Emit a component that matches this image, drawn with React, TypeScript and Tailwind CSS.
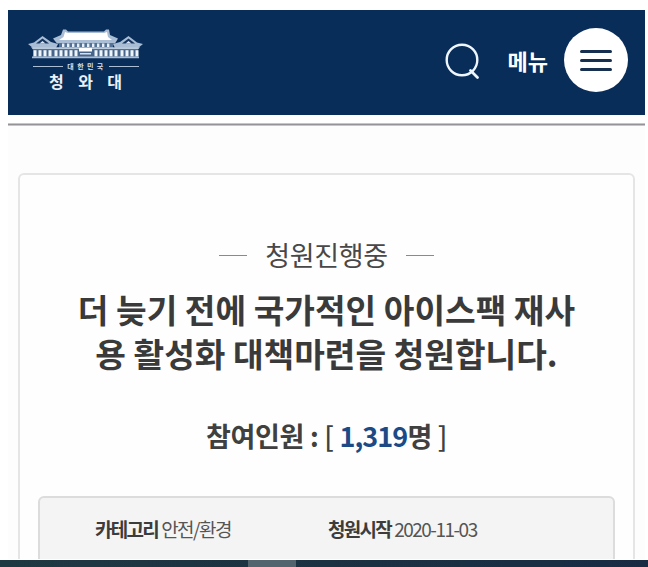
const LEFT_PILLARS = [5, 10, 15, 20, 26, 31, 36, 41, 46];
const RIGHT_PILLARS = [66, 71, 76, 81, 86, 92, 97, 102, 107];
const UPPER_PILLARS = [34, 39, 44, 49, 54, 59, 64, 69, 74, 79];

function BlueHouse() {
  return (
    <svg width="115" height="32" viewBox="0 0 115 32" className="block">
      {/* Side wings */}
      <path d="M0 15 L6 13.5 L14.5 7 L23 13 L30 15 L28 19 H5 Z" fill="#a9bdd4" />
      <path d="M115 15 L109 13.5 L100.5 7 L92 13 L85 15 L87 19 H110 Z" fill="#a9bdd4" />
      <path d="M8 14.5 L14.5 9.5 L21 14.5 Z" fill="#16365f" />
      <path d="M107 14.5 L100.5 9.5 L94 14.5 Z" fill="#16365f" />
      <path d="M11.5 14.5 L14.5 12 L17.5 14.5 Z" fill="#dbe6f2" />
      <path d="M103.5 14.5 L100.5 12 L97.5 14.5 Z" fill="#dbe6f2" />
      {/* Main roof */}
      <path
        d="M35 0.5 H38 L40 2.5 H76 L78 0.5 H81 L82 6 L90 9.5 L87 14.5 H29 L25 9.5 L33 6 Z"
        fill="#a9bdd4"
      />
      <path d="M37 3 L40 4 H76 L79 3 L80 8 L84 11 H31 L35.5 8 Z" fill="#fff" />
      {/* Upper floor and eaves */}
      <path d="M31 14 H85 V19 H31 Z" fill="#537296" />
      {UPPER_PILLARS.map((x) => (
        <rect key={x} x={x} y="14.5" width="2.4" height="3.5" fill="#e6eef7" />
      ))}
      <path d="M3 18.3 H112 L110 20.5 H5 Z" fill="#b9cadd" />
      {/* Ground floor */}
      <path d="M5 20.5 H110 V28 H5 Z" fill="#47658b" />
      {[...LEFT_PILLARS, ...RIGHT_PILLARS].map((x) => (
        <rect key={x} x={x + 0.5} y="21.2" width="3" height="6.2" fill="#eef4fa" />
      ))}
      <path d="M51 19 H64 V22.5 H51 Z" fill="#fff" />
      <path d="M52 24 H63 V25.5 H52 Z" fill="#d6e1ed" />
      <path d="M4 27.5 H111 V29.3 H4 Z" fill="#a9bdd4" />
    </svg>
  );
}

function Header() {
  return (
    <header className="flex h-[105px] shrink-0 items-start justify-between bg-[#092d59] pr-[17px] pl-5 text-white">
      <div className="flex w-[115px] flex-col items-center pt-[19px]">
        <BlueHouse />
        <div className="flex h-[10px] w-[106px] items-center justify-between">
          <span className="h-px w-[30px] bg-[#aabdd3]" />
          <span className="-mr-[3px] text-[7px] leading-[10px] font-bold tracking-[3.4px] text-[#d5e0ec]">대한민국</span>
          <span className="h-px w-[30px] bg-[#aabdd3]" />
        </div>
        <div className="flex w-[73px] justify-between text-[16px] leading-5 font-bold text-[#eaf1f8]">
          <span>청</span>
          <span>와</span>
          <span>대</span>
        </div>
      </div>
      <div className="flex h-[100px] items-center">
        <svg width="36" height="38" viewBox="0 0 36 38" fill="none" stroke="#eef6ff" className="mt-[2px]">
          <circle cx="17" cy="18" r="15.3" strokeWidth="2.4" />
          <path d="M25.5 28.5 L32.5 35.5" strokeWidth="2.8" strokeLinecap="round" />
        </svg>
        <span className="ml-[27px] text-[22px] leading-8 font-bold">메뉴</span>
        <button className="ml-4 flex h-16 w-16 flex-col items-center justify-center gap-[6px] rounded-full bg-white">
          <span className="h-[3px] w-8 rounded-full bg-[#17304f]" />
          <span className="h-[3px] w-8 rounded-full bg-[#17304f]" />
          <span className="h-[3px] w-8 rounded-full bg-[#17304f]" />
        </button>
      </div>
    </header>
  );
}

function Info({ label, value }: { label: string; value: string }) {
  return (
    <div className="flex gap-[3px] text-[19px] leading-7 whitespace-nowrap">
      <span className="font-bold tracking-[-1.7px] text-[#3c3c3c]">{label}</span>
      <span className="tracking-[-1.5px] text-[#555]">{value}</span>
    </div>
  );
}

export default function App() {
  return (
    <div className="flex h-[567px] w-[648px] flex-col overflow-hidden bg-white font-['Noto_Sans_CJK_KR',sans-serif]">
      <div className="flex h-[559px] flex-col overflow-hidden pt-[10px] pr-[3px] pl-2">
        <Header />
        <div className="mt-2 h-[3px] shrink-0 border-y border-[#c6c6c6] bg-[#969398]" />
        <main className="flex-1 bg-[#fdfdfd] px-[10px] pt-[47px]">
          <section className="h-[420px] rounded-[6px] border-2 border-[#e5e5e5] bg-[#fefefe] px-[18px] pt-[60px] text-center">
            <div className="flex items-center justify-center gap-[18px] text-[27px] leading-10 tracking-[-0.3px] text-[#484848]">
              <span className="h-px w-7 bg-[#8a8a8a]" />
              <span>청원진행중</span>
              <span className="h-px w-7 bg-[#8a8a8a]" />
            </div>
            <h1 className="mt-[12px] text-[33.3px] leading-[44px] font-bold text-[#3a3a3a]">
              더 늦기 전에 국가적인 아이스팩 재사
              <br />용 활성화 대책마련을 청원합니다.
            </h1>
            <p className="mt-[41px] text-[27px] leading-10 font-bold tracking-[-0.3px] text-[#404040]">
              참여인원 : <span className="font-medium">[</span>{" "}
              <span className="tracking-[-0.9px] text-[#1b4a86]">1,319</span>명{" "}
              <span className="font-medium">]</span>
            </p>
            <div className="mt-[40px] flex h-[90px] rounded-[6px] border-2 border-[#dcdcdc] bg-[#f4f4f4] pt-[17px] pl-[55px]">
              <div className="w-[233px]">
                <Info label="카테고리" value="안전/환경" />
              </div>
              <Info label="청원시작" value="2020-11-03" />
            </div>
          </section>
        </main>
      </div>
      <div className="mt-px flex h-[7px] bg-linear-to-r from-[#1f3942] to-[#182b43]">
        <div className="ml-[248px] h-full w-12 bg-[#52656e]" />
      </div>
    </div>
  );
}
